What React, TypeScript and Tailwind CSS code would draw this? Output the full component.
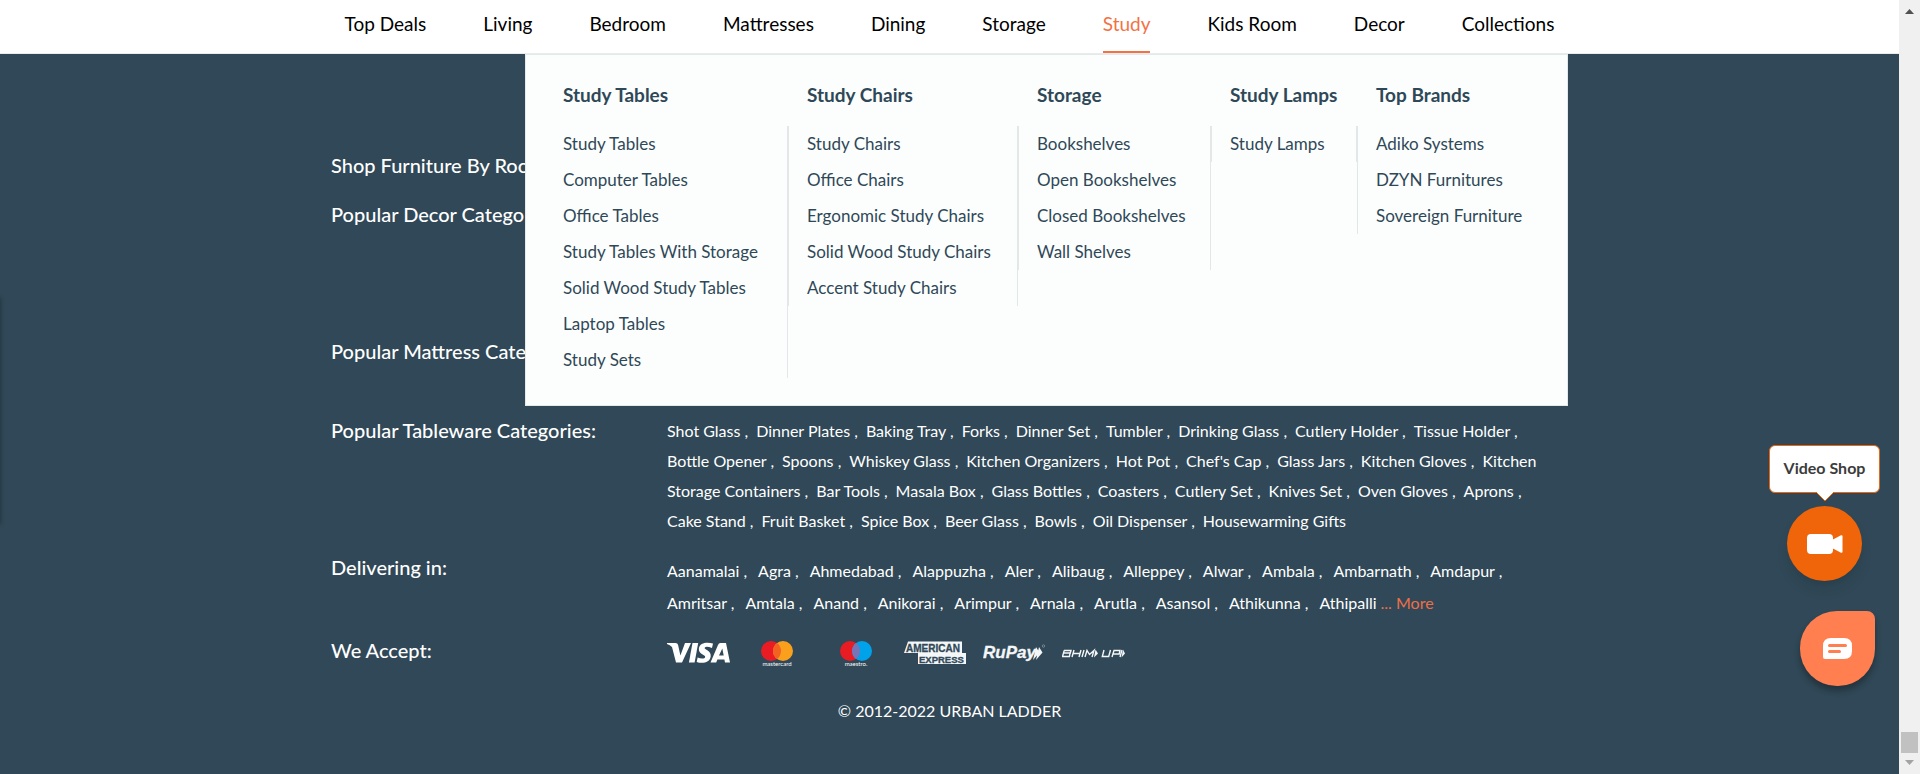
import React from "react";

const NAV = ["Top Deals", "Living", "Bedroom", "Mattresses", "Dining", "Storage", "Study", "Kids Room", "Decor", "Collections"];

const MENU = [
  { title: "Study Tables", width: "w-[244px]", list: "border-r pl-[19px]", items: ["Study Tables", "Computer Tables", "Office Tables", "Study Tables With Storage", "Solid Wood Study Tables", "Laptop Tables", "Study Sets"] },
  { title: "Study Chairs", width: "w-[230px]", list: "border-x pl-[18px]", items: ["Study Chairs", "Office Chairs", "Ergonomic Study Chairs", "Solid Wood Study Chairs", "Accent Study Chairs"] },
  { title: "Storage", width: "w-[193px]", list: "border-x pl-[18px]", items: ["Bookshelves", "Open Bookshelves", "Closed Bookshelves", "Wall Shelves"] },
  { title: "Study Lamps", width: "w-[146px]", list: "border-x pl-[18px]", items: ["Study Lamps"] },
  { title: "Top Brands", width: "w-[192px]", list: "border-l pl-[18px]", items: ["Adiko Systems", "DZYN Furnitures", "Sovereign Furniture"] },
];

const TABLEWARE = [
  ["Shot Glass", "Dinner Plates", "Baking Tray", "Forks", "Dinner Set", "Tumbler", "Drinking Glass", "Cutlery Holder", "Tissue Holder"],
  ["Bottle Opener", "Spoons", "Whiskey Glass", "Kitchen Organizers", "Hot Pot", "Chef's Cap", "Glass Jars", "Kitchen Gloves", "Kitchen"],
  ["Storage Containers", "Bar Tools", "Masala Box", "Glass Bottles", "Coasters", "Cutlery Set", "Knives Set", "Oven Gloves", "Aprons"],
  ["Cake Stand", "Fruit Basket", "Spice Box", "Beer Glass", "Bowls", "Oil Dispenser", "Housewarming Gifts"],
];

const CITIES = [
  ["Aanamalai", "Agra", "Ahmedabad", "Alappuzha", "Aler", "Alibaug", "Alleppey", "Alwar", "Ambala", "Ambarnath", "Amdapur"],
  ["Amritsar", "Amtala", "Anand", "Anikorai", "Arimpur", "Arnala", "Arutla", "Asansol", "Athikunna", "Athipalli"],
];

function Links({ rows, open, more, leading, gap }: { rows: string[][]; open: number[]; more?: boolean; leading: string; gap: string }) {
  return (
    <div className={"text-base whitespace-nowrap " + leading}>
      {rows.map((row, r) => (
        <div key={r} className="flex">
          <div className={"flex " + gap}>
            {row.map((name, i) => (
              <span key={name}>
                <a href="#">{name}</a>
                {i === row.length - 1 && open.includes(r) ? "" : " ,"}
              </span>
            ))}
          </div>
          {more && r === rows.length - 1 && <a href="#" className="ml-1 text-[#ed6f47]">... More</a>}
        </div>
      ))}
    </div>
  );
}

function Row({ label, className, children }: { label: string; className: string; children?: React.ReactNode }) {
  return (
    <section className={"flex " + className}>
      <h2 className="w-[336px] shrink-0 text-xl leading-7 font-medium whitespace-nowrap">{label}</h2>
      <div className="min-w-0 flex-1">{children}</div>
    </section>
  );
}

function Payments() {
  return (
    <div className="flex gap-4 pt-1">
      <svg width="63" height="26" viewBox="0 0 63 26" role="img" aria-label="Visa">
        <g fill="#fff">
          <path d="M0 3h8.500q2.200 0 2.600 2l2.300 10.500L18 3h6L15 22.500H9L5 7Q3 5 0 4z" />
          <path d="M25.500 3h5.700l-3.600 19.500h-5.700z" />
          <path d="M46 3.600 45 8q-6-2.400-7.300-.3c-.8 2 6.800 2.600 6 8.600-.7 6.800-8.800 7.600-14 5.600l.9-4.500c3.400 1.600 7.200 1.500 7.600-.5.3-2.300-7.200-2.600-6.300-8.600C32.700 2.500 40.500 1.700 46 3.600z" />
          <path fillRule="evenodd" d="M53.500 3H59l4 19.500h-5l-.6-3h-7l-1.200 3h-5.700L51 5q.7-2 2.500-2zm1.800 5.500L52 15.500h4.700z" />
        </g>
      </svg>
      <svg width="63" height="26" viewBox="0 0 63 26" role="img" aria-label="Mastercard">
        <circle cx="25" cy="11" r="10" fill="#e91c24" />
        <circle cx="37" cy="11" r="10" fill="#faa01c" />
        <path d="M31 3a10 10 0 0 1 0 16a10 10 0 0 1 0-16z" fill="#f26322" />
        <text x="31" y="25.500" fontSize="6" fill="#fff" textAnchor="middle">mastercard</text>
      </svg>
      <svg width="63" height="26" viewBox="0 0 63 26" role="img" aria-label="Maestro">
        <circle cx="25" cy="11" r="10" fill="#e91c24" />
        <circle cx="37" cy="11" r="10" fill="#00a2e9" />
        <path d="M31 3a10 10 0 0 1 0 16a10 10 0 0 1 0-16z" fill="#7774b8" />
        <text x="31" y="25.500" fontSize="6" fill="#fff" textAnchor="middle">maestro.</text>
      </svg>
      <svg width="63" height="26" viewBox="0 0 63 26" role="img" aria-label="American Express">
        <path d="M4 1.500H58V13H62v11H14V13H0z" fill="#f4f6f7" />
        <g fill="#304857" stroke="#304857" strokeWidth=".3" fontFamily="Liberation Sans, sans-serif" fontWeight="700">
          <text x="2" y="11.500" fontSize="10">AMERICAN</text>
          <text x="15" y="22.500" fontSize="9.500">EXPRESS</text>
        </g>
      </svg>
      <svg width="63" height="26" viewBox="0 0 63 26" role="img" aria-label="RuPay">
        <text x="0" y="18" fill="#f4f6f7" stroke="#f4f6f7" strokeWidth=".3" fontFamily="Liberation Sans, sans-serif" fontWeight="700" fontStyle="italic" fontSize="17">RuPay</text>
        <path d="M53 7l3.500 5.500L50 20zM56 7l3.500 5.500L53 20z" fill="#f4f6f7" />
        <circle cx="60.500" cy="6" r="1.200" fill="none" stroke="#8d9aa3" strokeWidth=".7" />
      </svg>
      <svg width="63" height="26" viewBox="0 0 63 26" role="img" aria-label="BHIM UPI">
        <g fill="none" stroke="#f4f6f7" strokeWidth="1.400">
          <path d="M2 10.500h7l-.7 2.500H1.400 8l-.6 3.500H.5l1.700-6M12 10l-2 7M19 10l-2 7M11.300 13.500h7M22 10l-2 7M23 17l2-6.500 2.500 4 4.500-4-2 6.500M42 10l-1.700 6.500h6.400L48.500 10M50 17l2-6.500h6l-.8 3.500H51M60 10l-2 7" />
        </g>
        <path d="M33.500 9.500l2.500 4-4 4zM61 9.500l2 4-3.500 4z" fill="#f4f6f7" />
      </svg>
    </div>
  );
}

function MegaMenu() {
  return (
    <div className="absolute top-0 right-0 left-[194px] flex h-[352px] border border-[#e4e9ea] bg-[#fcfefd] pl-[18px] text-[#2f4858]">
      {MENU.map((col) => (
        <div key={col.title} className={"shrink-0 pt-[26px] " + col.width}>
          <h3 className="pl-[19px] text-[19px] leading-7 font-bold whitespace-nowrap">{col.title}</h3>
          <ul className={"mt-[17px] border-[#e4e7e8] text-[17px] leading-9 whitespace-nowrap " + col.list}>
            {col.items.map((item) => (
              <li key={item}><a href="#">{item}</a></li>
            ))}
          </ul>
        </div>
      ))}
    </div>
  );
}

function Floating() {
  return (
    <div className="absolute right-6 bottom-[88px] flex flex-col items-end">
      <div className="relative mr-[-5px] flex h-12 w-[111px] items-center justify-center rounded-md border border-[#f0640a] bg-white pb-[2px] text-base font-bold text-[#3c3c3c]">
        Video Shop
        <svg className="absolute top-[46px] left-[46px]" width="18" height="10" viewBox="0 0 18 10">
          <path d="M0 0h18L9 9z" fill="#fff" />
          <path d="M0 0l9 9 9-9" fill="none" stroke="#f0640a" />
        </svg>
      </div>
      <button aria-label="Video Shop" className="mt-[13px] mr-[13px] flex size-[75px] items-center justify-center rounded-full bg-[#f0640a] shadow-lg">
        <svg width="36" height="20" viewBox="0 0 36 20" fill="#fff">
          <rect width="26" height="20" rx="4" />
          <path d="M25 6l9-4.700q1.500-.6 1.500 1v15.400q0 1.600-1.500 1L25 14z" />
        </svg>
      </button>
      <button aria-label="Chat" className="mt-[30px] flex size-[75px] items-center justify-center rounded-l-[37px] rounded-tr-[8px] rounded-br-[37px] bg-[#ff7f50] shadow-[0_5px_6px_rgba(0,0,0,0.3)]">
        <svg width="29" height="21" viewBox="0 0 29 21">
          <path d="M8 0h13q8 0 8 8v5q0 8-8 8H2q-2 0-2-2V8q0-8 8-8z" fill="#fff" />
          <path d="M6.500 7.500h16M6.500 13.500h10" stroke="#ff7f50" strokeWidth="3" strokeLinecap="round" />
        </svg>
      </button>
    </div>
  );
}

export default function App() {
  return (
    <div className="flex min-h-screen bg-[#304857] font-['Lato',sans-serif] text-white">
      <div className="relative flex min-w-0 flex-1 flex-col overflow-hidden">
        <div className="absolute top-[298px] -left-1 h-[226px] w-1 shadow-[0_0_4px_rgba(0,0,0,0.4)]" />
        <nav className="flex h-[54px] justify-center gap-[57px] border-b border-[#e9eced] bg-white text-[19px] text-black">
          {NAV.map((n) => (
            <a
              key={n}
              href="#"
              className={"flex items-center border-b-2 pb-[2px] whitespace-nowrap " + (n === "Study" ? "border-[#f37243] text-[#f37243]" : "border-transparent")}
            >
              {n}
            </a>
          ))}
        </nav>
        <main className="relative mx-auto w-[1237px] max-w-full pt-[97px]">
          <Row label="Shop Furniture By Room:" className="h-[49px]" />
          <Row label="Popular Decor Categories:" className="h-[137px]" />
          <Row label="Popular Mattress Categories:" className="h-[79px]" />
          <Row label="Popular Tableware Categories:" className="h-[137px]">
            <Links rows={TABLEWARE} open={[1, 3]} leading="leading-[30px]" gap="gap-2" />
          </Row>
          <Row label="Delivering in:" className="h-[83px]">
            <div className="pt-[2px]">
              <Links rows={CITIES} open={[1]} more leading="leading-8" gap="gap-[11px]" />
            </div>
          </Row>
          <Row label="We Accept:" className="h-[61px]"><Payments /></Row>
          <p className="text-center text-base leading-7">© 2012-2022 URBAN LADDER</p>
          <MegaMenu />
        </main>
        <Floating />
      </div>
      <div className="flex w-[21px] shrink-0 flex-col items-center bg-[#f0f0f0]" aria-hidden="true">
        <svg width="21" height="21" viewBox="0 0 21 21"><path d="M6 14l4.500-5 4.500 5z" fill="#505050" /></svg>
        <div className="mt-auto h-[21px] w-[17px] bg-[#c1c1c1]" />
        <svg width="21" height="21" viewBox="0 0 21 21"><path d="M6 7l4.500 5L15 7z" fill="#a3a3a3" /></svg>
      </div>
    </div>
  );
}
